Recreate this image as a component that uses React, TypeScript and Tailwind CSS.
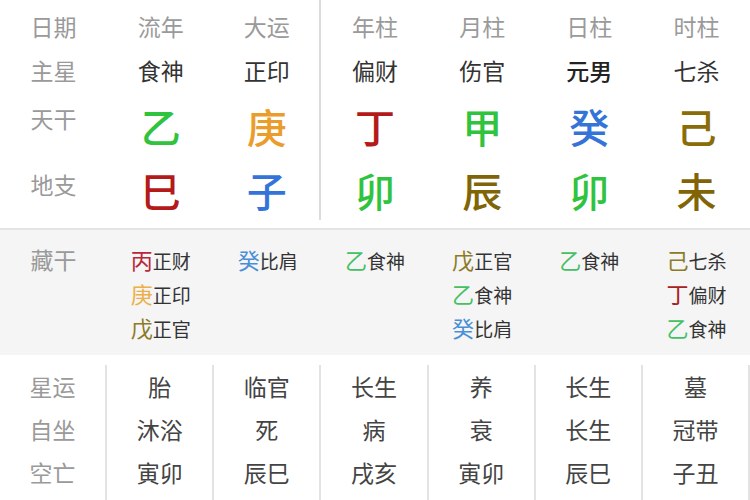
import React from 'react';

type Cell = { t: string; c: string };

const top: { head: string; star: string; starCls: string; gan: Cell; zhi: Cell }[] = [
  { head: '流年', star: '食神', starCls: 'text-[#333]', gan: { t: '乙', c: 'text-[#2fc33e]' }, zhi: { t: '巳', c: 'text-[#b41a1a]' } },
  { head: '大运', star: '正印', starCls: 'text-[#333]', gan: { t: '庚', c: 'text-[#eb9d2c]' }, zhi: { t: '子', c: 'text-[#3474d8]' } },
  { head: '年柱', star: '偏财', starCls: 'text-[#333]', gan: { t: '丁', c: 'text-[#b41a1a]' }, zhi: { t: '卯', c: 'text-[#2fc33e]' } },
  { head: '月柱', star: '伤官', starCls: 'text-[#333]', gan: { t: '甲', c: 'text-[#2fc33e]' }, zhi: { t: '辰', c: 'text-[#806406]' } },
  { head: '日柱', star: '元男', starCls: 'text-[#222] font-medium', gan: { t: '癸', c: 'text-[#3474d8]' }, zhi: { t: '卯', c: 'text-[#2fc33e]' } },
  { head: '时柱', star: '七杀', starCls: 'text-[#333]', gan: { t: '己', c: 'text-[#8a6c08]' }, zhi: { t: '未', c: 'text-[#806406]' } },
];

// 藏干 lines per column
const hidden: { s: string; c: string; g: string }[][] = [
  [
    { s: '丙', c: 'text-[#b8283a]', g: '正财' },
    { s: '庚', c: 'text-[#ebb048]', g: '正印' },
    { s: '戊', c: 'text-[#8c7a26]', g: '正官' },
  ],
  [{ s: '癸', c: 'text-[#4a8fd6]', g: '比肩' }],
  [{ s: '乙', c: 'text-[#45c064]', g: '食神' }],
  [
    { s: '戊', c: 'text-[#8c7a26]', g: '正官' },
    { s: '乙', c: 'text-[#45c064]', g: '食神' },
    { s: '癸', c: 'text-[#4a8fd6]', g: '比肩' },
  ],
  [{ s: '乙', c: 'text-[#45c064]', g: '食神' }],
  [
    { s: '己', c: 'text-[#8c7a26]', g: '七杀' },
    { s: '丁', c: 'text-[#a82020]', g: '偏财' },
    { s: '乙', c: 'text-[#45c064]', g: '食神' },
  ],
];

const bottom = [
  ['星运', '自坐', '空亡'],
  ['胎', '沐浴', '寅卯'],
  ['临官', '死', '辰巳'],
  ['长生', '病', '戌亥'],
  ['养', '衰', '寅卯'],
  ['长生', '长生', '辰巳'],
  ['墓', '冠带', '子丑'],
];

const font = { fontFamily: '"Noto Sans CJK SC", "Noto Sans", sans-serif' };

export default function App() {
  return (
    <div className="w-[750px] h-[500px] overflow-hidden bg-white" style={font}>
      {/* 四柱 */}
      <div className="pb-[8px] border-b-2 border-[#e4e4e4]">
        <div className="grid grid-cols-7 h-[220px]">
          <div className="flex flex-col items-center text-[23px] text-[#9a9a9a]">
            <div className="h-[48px] pt-[4px] leading-[44px]">日期</div>
            <div className="h-[44px] leading-[44px]">主星</div>
            <div className="h-[66px] pt-[4px] leading-[44px]">天干</div>
            <div className="h-[62px] pt-[4px] leading-[44px]">地支</div>
          </div>
          {top.map((col, i) => (
            <div
              key={i}
              className={`flex flex-col items-center ${i === 1 ? 'border-r-2 border-[#dcdcdc]' : ''}`}
            >
              <div className="h-[48px] pt-[4px] leading-[44px] text-[23px] text-[#9a9a9a]">{col.head}</div>
              <div className={`h-[44px] leading-[44px] text-[23px] ${col.starCls}`}>{col.star}</div>
              <div className={`h-[66px] pt-[10px] leading-[48px] text-[40px] font-medium ${col.gan.c}`}>{col.gan.t}</div>
              <div className={`h-[62px] pt-[8px] leading-[48px] text-[40px] font-medium ${col.zhi.c}`}>{col.zhi.t}</div>
            </div>
          ))}
        </div>
      </div>

      {/* 藏干 */}
      <div className="grid grid-cols-7 h-[125px] pt-[13px] bg-[#f5f5f5]">
        <div className="flex justify-center text-[23px] leading-[33px] text-[#9a9a9a]">藏干</div>
        {hidden.map((lines, i) => (
          <div key={i} className="flex justify-center">
            <div className="flex flex-col items-start">
              {lines.map((l, j) => (
                <div key={j} className="flex items-baseline leading-[33px]">
                  <span className={`text-[22px] ${l.c}`}>{l.s}</span>
                  <span className="text-[19px] text-[#333]">{l.g}</span>
                </div>
              ))}
            </div>
          </div>
        ))}
      </div>

      {/* 星运 自坐 空亡 */}
      <div className="grid grid-cols-7 h-[145px] pt-[10px]">
        {bottom.map((col, i) => (
          <div
            key={i}
            className={`flex flex-col items-center border-r-2 border-[#e3e3e3] text-[23px] leading-[43px] ${
              i === 0 ? 'text-[#9a9a9a]' : 'text-[#444]'
            }`}
          >
            {col.map((t, j) => (
              <div key={j}>{t}</div>
            ))}
          </div>
        ))}
      </div>
    </div>
  );
}
